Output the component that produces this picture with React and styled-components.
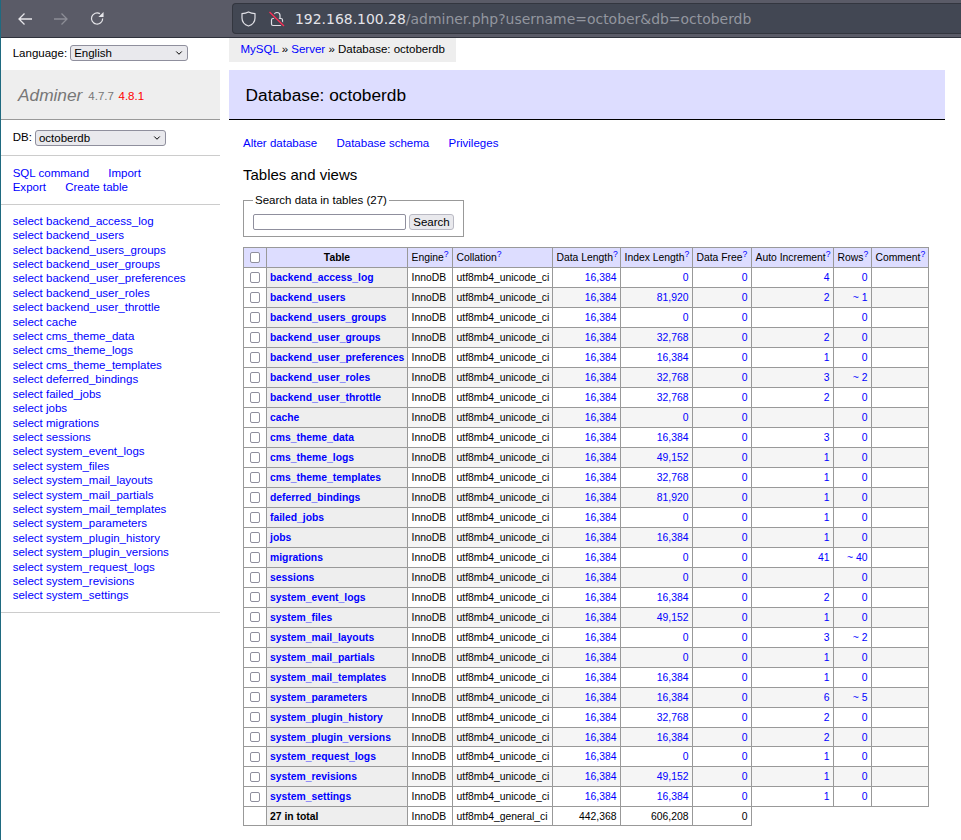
import React from "react";
import styled, { createGlobalStyle } from "styled-components";
import { ChevronDown } from "lucide-react";

const GlobalStyle = createGlobalStyle`
  html, body {
    margin: 0;
    padding: 0;
    background: #fff;
  }
  body {
    color: #000;
    font: 11.52px/14.4px "Liberation Sans", Arial, sans-serif;
  }
  a {
    color: #00f;
    text-decoration: none;
  }
`;

const Window = styled.div`
  min-height: 100vh;
  box-sizing: border-box;
  border-left: 1px solid #1f6a80;
`;

const BrowserBar = styled.div`
  height: 38px;
  box-sizing: border-box;
  display: flex;
  align-items: center;
  background: #5a5b67;
  border-bottom: 1px solid #2f323c;
  padding: 0 0 0 17px;
`;

const NavButton = styled.span`
  display: flex;
  width: 14px;
  margin-right: ${(p) => p.$gap}px;
  color: ${(p) => (p.$off ? "#8c8d96" : "#e6e6ea")};
`;

const UrlBar = styled.div`
  flex: 1;
  height: 31px;
  box-sizing: border-box;
  margin-left: 128px;
  display: flex;
  align-items: center;
  background: #424753;
  border: 1px solid #33363f;
  border-right: 0;
  border-radius: 4px 0 0 4px;
  padding-left: 8px;
  color: #e0e0e6;
`;

const UrlIcon = styled.span`
  display: flex;
  margin: ${(p) => p.$margin};
`;

const UrlText = styled.span`
  font: 13.95px "DejaVu Sans", sans-serif;
  color: #e4e4ea;
  white-space: nowrap;
`;

const UrlRest = styled.span`
  color: #93969f;
`;

const Page = styled.div`
  display: grid;
  grid-template-columns: 219px 1fr;
  align-items: start;
`;

const Sidebar = styled.aside`
  display: flex;
  flex-direction: column;
`;

const Lang = styled.div`
  height: 32px;
  box-sizing: border-box;
  display: flex;
  align-items: center;
  gap: 3px;
  padding: 0 0 2px 11.7px;
`;

const SelectWrap = styled.span`
  position: relative;
  display: inline-flex;
  width: ${(p) => p.$width}px;
  svg {
    position: absolute;
    right: 4px;
    top: 3px;
    pointer-events: none;
  }
`;

const Select = styled.select`
  appearance: none;
  width: 100%;
  height: 16px;
  box-sizing: border-box;
  padding: 0 0 0 3px;
  margin: 0;
  border: 1px solid #8f8f9d;
  border-radius: 3px;
  background: #e9e9ed;
  color: #000;
  font: 11.52px "Liberation Sans", sans-serif;
`;

const Logo = styled.h1`
  margin: 0;
  height: 50px;
  box-sizing: border-box;
  padding: 1px 0 0 17px;
  display: flex;
  align-items: center;
  background: #eee;
  border-bottom: 1px solid #999;
  color: #777;
  font-size: 17.3px;
  font-weight: normal;
`;

const LogoName = styled.em`
  margin-right: 6px;
`;

const Version = styled.span`
  font-size: 11.52px;
  margin: 3px 4.5px 0 0;
  color: ${(p) => p.$color || "#777"};
`;

const DbForm = styled.div`
  height: 36px;
  box-sizing: border-box;
  display: flex;
  align-items: center;
  gap: 3px;
  padding-left: 11.7px;
  border-bottom: 1px solid #ccc;
`;

const MenuBlock = styled.div`
  padding: ${(p) => p.$pad};
  border-bottom: 1px solid #ccc;
`;

const LinksRow = styled.div`
  display: flex;
  gap: 19.2px;
`;

const TableLink = styled.a`
  display: block;
`;

const Main = styled.main`
  min-width: 0;
`;

const Breadcrumb = styled.div`
  display: inline-block;
  margin-left: 9px;
  height: 24px;
  line-height: 22px;
  padding: 0 11.5px;
  background: #eee;
  white-space: nowrap;
`;

const Content = styled.div`
  padding: 8px 0 0 23px;
`;

const Heading = styled.h2`
  margin: 0 16px 0 -14px;
  height: 50px;
  box-sizing: border-box;
  padding: 2px 0 0 16.6px;
  display: flex;
  align-items: center;
  background: #ddf;
  border-bottom: 1px solid #000;
  font-size: 17.3px;
  font-weight: normal;
`;

const Links = styled.p`
  display: flex;
  gap: 19.2px;
  margin: 16px 0 0;
`;

const SubHeading = styled.h3`
  margin: 15px 0 0;
  font-size: 15px;
  line-height: 19px;
  font-weight: normal;
`;

const SearchBox = styled.fieldset`
  width: 221px;
  height: 43px;
  box-sizing: border-box;
  margin: 10px 0 0;
  padding: 0 0 0 9px;
  display: flex;
  align-items: center;
  gap: 3px;
  border: 1px solid #999;
  legend {
    padding: 0 2px;
    line-height: 13px;
  }
`;

const SearchInput = styled.input`
  width: 153px;
  height: 16px;
  box-sizing: border-box;
  margin: 0;
  padding: 0 3px;
  border: 1px solid #8f8f9d;
  border-radius: 2px;
  background: #fff;
`;

const SearchButton = styled.button`
  width: 45px;
  height: 16px;
  box-sizing: border-box;
  margin: 0;
  padding: 0;
  border: 1px solid #b9b9c3;
  border-radius: 3px;
  background: #e9e9ed;
  color: #000;
  font: 11.52px "Liberation Sans", sans-serif;
`;

const Grid = styled.table`
  margin-top: 9.84px;
  table-layout: fixed;
  width: 685px;
  border-collapse: collapse;
  font-size: 10.37px;
  line-height: 13px;
`;

const Head = styled.th`
  height: 20px;
  padding: 0 3.5px;
  box-sizing: border-box;
  border: 1px solid #999;
  background: #ddf;
  font-weight: ${(p) => (p.$strong ? "bold" : "normal")};
  text-align: ${(p) => (p.$strong ? "center" : "left")};
  white-space: nowrap;
`;

const Help = styled.sup`
  font-size: 8.6px;
  line-height: 0;
  color: #00f;
`;

const Cell = styled.td`
  height: 19.97px;
  box-sizing: border-box;
  padding: 0 3.5px;
  border: 1px solid #999;
  background: ${(p) => (p.$shade ? "#f5f5f5" : "#fff")};
  text-align: ${(p) => (p.$num ? "right" : "left")};
  white-space: nowrap;
`;

const NameCell = styled.th`
  padding: 0 3px;
  border: 1px solid #999;
  background: #eee;
  text-align: left;
  white-space: nowrap;
`;

const CheckCell = styled(Cell)`
  padding: 0;
  text-align: center;
  line-height: 0;
  background: #fff;
`;

const HeadCheckCell = styled(Head)`
  padding: 0;
  line-height: 0;
  text-align: center;
`;

const Check = styled.input.attrs({ type: "checkbox" })`
  appearance: none;
  width: 10.5px;
  height: 10.5px;
  margin: 0;
  border: 1px solid #8f8f9d;
  border-radius: 2px;
  background: #fff;
  vertical-align: middle;
`;

const TotalCell = styled(Cell)`
  height: 17.5px;
`;

const TotalName = styled(NameCell)`
  height: 17.5px;
`;

const BackIcon = () => (
  <svg width="14" height="12" viewBox="0 0 14 12" fill="none" stroke="currentColor" strokeWidth="1.3">
    <path d="M14 6H1M6.5.5 1 6l5.5 5.5" />
  </svg>
);

const ForwardIcon = () => (
  <svg width="14" height="12" viewBox="0 0 14 12" fill="none" stroke="currentColor" strokeWidth="1.3">
    <path d="M0 6h13M7.5.5 13 6l-5.500 5.500" />
  </svg>
);

const ReloadIcon = () => (
  <svg width="15" height="15" viewBox="0 0 15 15" fill="none" stroke="currentColor" strokeWidth="1.3">
    <path d="M13.6 7.500A6 6 0 1 1 10.600 2.300" />
    <path d="M14.500 0.500v5.500H9z" fill="currentColor" stroke="none" />
  </svg>
);

const ShieldIcon = () => (
  <svg width="15" height="16" viewBox="0 0 15 16" fill="none" stroke="#e0e0e6" strokeWidth="1.2">
    <path d="M7.500 1C5.500 2 3.300 2.500 1 2.700V7c0 4 3 6.800 6.500 8 3.500-1.200 6.500-4 6.500-8V2.700C11.700 2.500 9.500 2 7.500 1z" />
  </svg>
);

const LockIcon = () => (
  <svg width="16" height="16" viewBox="0 0 16 16" fill="none" stroke="#e0e0e6" strokeWidth="1.2">
    <rect x="2.500" y="7.500" width="11" height="7" rx="1.500" />
    <path d="M5 7.500V4.500a3 3 0 0 1 6 0v3" />
    <path d="M0 0l16 16" stroke="#424753" strokeWidth="3.500" />
    <path d="M.5 1 15 15" stroke="#ff2d55" strokeWidth="1.300" />
  </svg>
);

const tables = [
  ["backend_access_log", "0", "4", "0"],
  ["backend_users", "81,920", "2", "~ 1"],
  ["backend_users_groups", "0", "", "0"],
  ["backend_user_groups", "32,768", "2", "0"],
  ["backend_user_preferences", "16,384", "1", "0"],
  ["backend_user_roles", "32,768", "3", "~ 2"],
  ["backend_user_throttle", "32,768", "2", "0"],
  ["cache", "0", "", "0"],
  ["cms_theme_data", "16,384", "3", "0"],
  ["cms_theme_logs", "49,152", "1", "0"],
  ["cms_theme_templates", "32,768", "1", "0"],
  ["deferred_bindings", "81,920", "1", "0"],
  ["failed_jobs", "0", "1", "0"],
  ["jobs", "16,384", "1", "0"],
  ["migrations", "0", "41", "~ 40"],
  ["sessions", "0", "", "0"],
  ["system_event_logs", "16,384", "2", "0"],
  ["system_files", "49,152", "1", "0"],
  ["system_mail_layouts", "0", "3", "~ 2"],
  ["system_mail_partials", "0", "1", "0"],
  ["system_mail_templates", "16,384", "1", "0"],
  ["system_parameters", "16,384", "6", "~ 5"],
  ["system_plugin_history", "32,768", "2", "0"],
  ["system_plugin_versions", "16,384", "2", "0"],
  ["system_request_logs", "0", "1", "0"],
  ["system_revisions", "49,152", "1", "0"],
  ["system_settings", "16,384", "1", "0"],
];

const columnWidths = [23, 141, 45, 100, 68, 72, 59, 82, 38, 57];
const helpColumns = ["Engine", "Collation", "Data Length", "Index Length", "Data Free", "Auto Increment", "Rows", "Comment"];

const App = () => (
  <Window>
    <GlobalStyle />
    <BrowserBar>
      <NavButton $gap={22}><BackIcon /></NavButton>
      <NavButton $gap={22} $off><ForwardIcon /></NavButton>
      <NavButton $gap={0}><ReloadIcon /></NavButton>
      <UrlBar>
        <UrlIcon $margin="0"><ShieldIcon /></UrlIcon>
        <UrlIcon $margin="0 10px 0 13px"><LockIcon /></UrlIcon>
        <UrlText>192.168.100.28<UrlRest>/adminer.php?username=october&amp;db=octoberdb</UrlRest></UrlText>
      </UrlBar>
    </BrowserBar>
    <Page>
      <Sidebar>
        <Lang>
          Language:
          <SelectWrap $width={118}>
            <Select defaultValue="English"><option>English</option></Select>
            <ChevronDown size={10} strokeWidth={2.4} />
          </SelectWrap>
        </Lang>
        <Logo>
          <LogoName>Adminer</LogoName>
          <Version>4.7.7</Version>
          <Version $color="#f00">4.8.1</Version>
        </Logo>
        <DbForm>
          DB:
          <SelectWrap $width={131}>
            <Select defaultValue="octoberdb"><option>octoberdb</option></Select>
            <ChevronDown size={10} strokeWidth={2.4} />
          </SelectWrap>
        </DbForm>
        <MenuBlock $pad="10px 0 9px 11.7px">
          <LinksRow><a href="#sql">SQL command</a><a href="#import">Import</a></LinksRow>
          <LinksRow><a href="#export">Export</a><a href="#create">Create table</a></LinksRow>
        </MenuBlock>
        <MenuBlock $pad="9px 0 9px 11.7px">
          {tables.map(([name]) => (
            <TableLink href={`#${name}`} key={name}>select {name}</TableLink>
          ))}
        </MenuBlock>
      </Sidebar>
      <Main>
        <Breadcrumb>
          <a href="#mysql">MySQL</a> » <a href="#server">Server</a> » Database: octoberdb
        </Breadcrumb>
        <Content>
          <Heading>Database: octoberdb</Heading>
          <Links>
            <a href="#alter">Alter database</a>
            <a href="#schema">Database schema</a>
            <a href="#privileges">Privileges</a>
          </Links>
          <SubHeading>Tables and views</SubHeading>
          <SearchBox>
            <legend>Search data in tables (27)</legend>
            <SearchInput />
            <SearchButton>Search</SearchButton>
          </SearchBox>
          <Grid>
            <colgroup>
              {columnWidths.map((w, i) => <col key={i} width={w} />)}
            </colgroup>
            <thead>
              <tr>
                <HeadCheckCell><Check /></HeadCheckCell>
                <Head $strong>Table</Head>
                {helpColumns.map((c) => (
                  <Head key={c}>{c}<Help>?</Help></Head>
                ))}
              </tr>
            </thead>
            <tbody>
              {tables.map(([name, index, auto, rows], i) => (
                <tr key={name}>
                  <CheckCell><Check /></CheckCell>
                  <NameCell><a href={`#${name}`}>{name}</a></NameCell>
                  <Cell $shade={i % 2 === 1}>InnoDB</Cell>
                  <Cell $shade={i % 2 === 1}>utf8mb4_unicode_ci</Cell>
                  <Cell $shade={i % 2 === 1} $num><a href="#d">16,384</a></Cell>
                  <Cell $shade={i % 2 === 1} $num><a href="#i">{index}</a></Cell>
                  <Cell $shade={i % 2 === 1} $num><a href="#f">0</a></Cell>
                  <Cell $shade={i % 2 === 1} $num><a href="#a">{auto}</a></Cell>
                  <Cell $shade={i % 2 === 1} $num><a href="#r">{rows}</a></Cell>
                  <Cell $shade={i % 2 === 1} />
                </tr>
              ))}
              <tr>
                <TotalCell />
                <TotalName>27 in total</TotalName>
                <TotalCell>InnoDB</TotalCell>
                <TotalCell>utf8mb4_general_ci</TotalCell>
                <TotalCell $num>442,368</TotalCell>
                <TotalCell $num>606,208</TotalCell>
                <TotalCell $num>0</TotalCell>
              </tr>
            </tbody>
          </Grid>
        </Content>
      </Main>
    </Page>
  </Window>
);

export default App;
